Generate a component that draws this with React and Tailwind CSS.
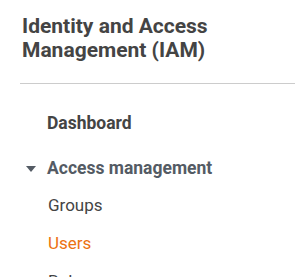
export default function App() {
  return (
    <div className="w-[295px] h-[277px] overflow-hidden bg-white font-['Roboto',sans-serif]">
      {/* cabecera */}
      <div className="pl-[22px] pt-[14px]">
        <h2 className="text-[21px] leading-6 font-bold text-[#444]">
          Identity and Access
          <br />
          Management (IAM)
        </h2>
      </div>
      <div className="ml-5 mt-[21px] border-t border-[#cccccc]" />

      {/* navegación */}
      <nav className="pt-[29px]">
        <a className="block pl-[47px] text-[17.5px] leading-5 font-bold text-[#444]">Dashboard</a>

        <div className="mt-[25px] flex items-center">
          <svg width="10" height="6" viewBox="0 0 10 6" className="ml-[26px] mr-[11px] mt-[2px]">
            <path d="M0 0h10L5 6z" fill="#545b64" />
          </svg>
          <span className="text-[17.5px] leading-5 font-bold text-[#545b64]">Access management</span>
        </div>

        <ul className="pl-[48px] pt-[17px] flex flex-col gap-[18px] text-[17px] leading-5">
          <li className="text-[#444]">Groups</li>
          <li className="text-[#ec7211]">Users</li>
          <li className="text-[#444]">Roles</li>
        </ul>
      </nav>
    </div>
  );
}
